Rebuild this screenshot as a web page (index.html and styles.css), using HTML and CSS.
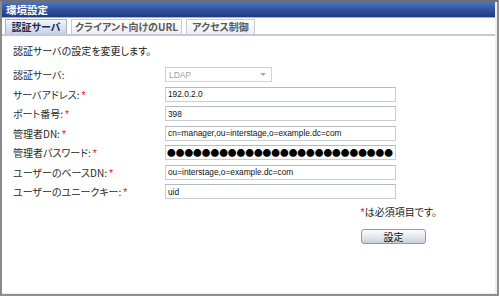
FILE: index.html
```html
<!DOCTYPE html>
<html lang="ja">
<head>
<meta charset="utf-8">
<title>環境設定</title>
<link rel="stylesheet" href="styles.css">
</head>
<body>
<div class="window">
  <div class="titlebar">環境設定</div>
  <div class="tabs">
    <div class="tab tab-auth active">認証サーバ</div>
    <div class="tab tab-url">クライアント向けのURL</div>
    <div class="tab tab-access">アクセス制御</div>
  </div>
  <div class="content">
    <p class="desc">認証サーバの設定を変更します。</p>
    <div class="form">
      <div class="label">認証サーバ:</div>
      <div class="select disabled"><span>LDAP</span><span class="arrow"></span></div>

      <div class="label">サーバアドレス:<span class="req">*</span></div>
      <div class="field"><input class="input" type="text" value="192.0.2.0"></div>

      <div class="label">ポート番号:<span class="req">*</span></div>
      <div class="field"><input class="input" type="text" value="398"></div>

      <div class="label">管理者DN:<span class="req">*</span></div>
      <div class="field"><input class="input" type="text" value="cn=manager,ou=interstage,o=example.dc=com"></div>

      <div class="label">管理者パスワード:<span class="req">*</span></div>
      <div class="field"><div class="input password">●●●●●●●●●●●●●●●●●●●●●●●●●●</div></div>

      <div class="label">ユーザーのベースDN:<span class="req">*</span></div>
      <div class="field"><input class="input" type="text" value="ou=interstage,o=example.dc=com"></div>

      <div class="label">ユーザーのユニークキー:<span class="req">*</span></div>
      <div class="field"><input class="input" type="text" value="uid"></div>
    </div>
    <div class="footer">
      <p class="note"><span class="req">*</span>は必須項目です。</p>
      <button class="button" type="button">設定</button>
    </div>
  </div>
</div>
</body>
</html>
```

FILE: styles.css
```css
html, body {
  margin: 0;
  padding: 0;
  background: #ffffff;
}

body {
  font-family: "Noto Sans CJK JP", "Liberation Sans", sans-serif;
  font-feature-settings: "palt";
  color: #222;
}

.window {
  box-sizing: border-box;
  width: 499px;
  height: 296px;
  border-top: 2px solid #707070;
  border-left: 2px solid #8a8a8a;
  border-right: 2px solid #8e8e8e;
  border-bottom: 2px solid #8e8e8e;
  padding-right: 2px;
  padding-bottom: 1px;
  background: #eeeeee;
  display: flex;
  flex-direction: column;
}

.titlebar {
  height: 15px;
  line-height: 15px;
  padding-left: 4px;
  font-size: 10.5px;
  font-weight: bold;
  color: #ffffff;
  background: linear-gradient(#5473b8 0%, #3556a2 45%, #1c3a86 100%);
  border-bottom: 1px solid #9fb0d2;
}

.tabs {
  display: flex;
  align-items: flex-end;
  gap: 4px;
  height: 15px;
  padding-top: 1px;
  padding-left: 3px;
  background: #ffffff;
  border-bottom: 2px solid #c3cad5;
}

.tab {
  box-sizing: border-box;
  height: 15px;
  line-height: 14px;
  text-align: center;
  font-size: 10px;
  font-weight: bold;
  color: #5a5a5a;
  border: 1px solid #c6cbd3;
  border-bottom: none;
  background: linear-gradient(#ffffff, #eceef2);
}

.tab-auth { width: 62px; }
.tab-url { width: 111px; }
.tab-access { width: 69px; }

.tab.active {
  color: #1d2b47;
  border-color: #a3b3ca;
  background: linear-gradient(#f1f5fb, #c3d3ea);
}

.content {
  flex: 1;
  background: #ffffff;
  padding-left: 11px;
}

.desc {
  margin: 8px 0 0 0;
  font-size: 10px;
  line-height: 14px;
  color: #222;
}

.form {
  margin-top: 9px;
  display: grid;
  grid-template-columns: 152px 231px;
  grid-auto-rows: 15px;
  row-gap: 4.5px;
}

.label {
  font-size: 10px;
  line-height: 15px;
  color: #2a2a2a;
  white-space: nowrap;
}

.req {
  color: #e31b1b;
  font-family: "Liberation Sans", sans-serif;
  font-size: 10.5px;
  margin-left: 2px;
}

.field {
  display: flex;
}

.input {
  box-sizing: border-box;
  width: 231px;
  height: 15px;
  margin: 0;
  padding: 0 2px;
  border: 1px solid #c8ccd3;
  border-top-color: #b4b9c2;
  background: #ffffff;
  font-family: "Liberation Sans", sans-serif;
  font-size: 8.3px;
  color: #111;
  outline: none;
}

.password {
  font-family: "Noto Sans CJK JP", sans-serif;
  font-feature-settings: normal;
  font-size: 8.7px;
  line-height: 13px;
  white-space: nowrap;
  overflow: hidden;
  color: #000;
  padding-left: 1px;
}

.select {
  box-sizing: border-box;
  width: 107px;
  height: 15px;
  display: flex;
  align-items: center;
  justify-content: space-between;
  padding: 0 5px 0 3px;
  border: 1px solid #cfd2d7;
  background: #ffffff;
  font-family: "Liberation Sans", sans-serif;
  font-size: 8.5px;
  color: #a0a0a0;
}

.arrow {
  width: 0;
  height: 0;
  border-left: 3px solid transparent;
  border-right: 3px solid transparent;
  border-top: 3px solid #a8a8a8;
}

.footer {
  width: 424px;
  margin-top: 6px;
  display: flex;
  flex-direction: column;
  align-items: flex-end;
}

.note {
  margin: 0;
  font-size: 10px;
  line-height: 14px;
  color: #222;
}

.note .req {
  margin-left: 0;
}

.button {
  box-sizing: border-box;
  width: 65px;
  height: 15px;
  margin: 10px 11px 0 0;
  padding: 0;
  border: 1px solid #8f98a8;
  border-radius: 3px;
  background: linear-gradient(#fbfcfd, #e3e7ee 55%, #c7cfdb);
  font-family: "Noto Sans CJK JP", sans-serif;
  font-size: 10px;
  line-height: 13px;
  color: #111;
}
```
